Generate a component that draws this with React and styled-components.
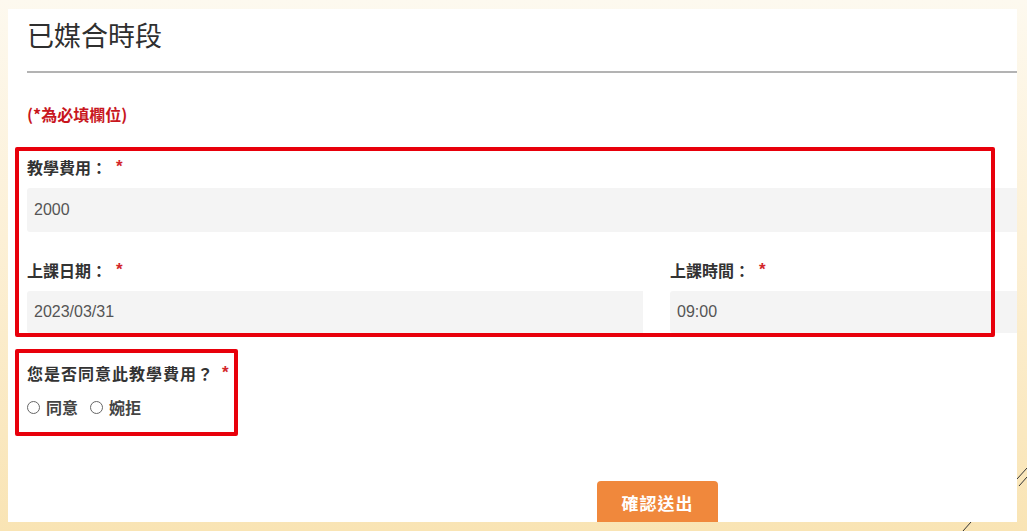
import React from "react";
import styled, { createGlobalStyle } from "styled-components";

const Global = createGlobalStyle`
  html, body { margin: 0; padding: 0; }
  body {
    width: 1027px;
    height: 531px;
    overflow: hidden;
    font-family: "Noto Sans CJK TC", "Liberation Sans", sans-serif;
  }
`;

const Page = styled.div`
  position: relative;
  box-sizing: border-box;
  width: 1027px;
  height: 531px;
  padding: 9px 10px 9px 8px;
  background: linear-gradient(to bottom, #fdf9ef 0%, #fcf0d6 45%, #f9e4b4 100%);
`;

const Deco = styled.svg`
  position: absolute;
  inset: 0;
  width: 1027px;
  height: 531px;
  pointer-events: none;
`;

const Panel = styled.main`
  position: relative;
  box-sizing: border-box;
  height: 100%;
  background: #fff;
  padding: 7px 0 0 19px;
  overflow: hidden;
`;

const Title = styled.h2`
  margin: 0;
  font-size: 27px;
  line-height: 38px;
  font-weight: 400;
  color: #2f2f2f;
`;

const Rule = styled.hr`
  margin: 17px 0 0;
  border: 0;
  height: 2px;
  background: #b3b3b3;
`;

const Required = styled.p`
  margin: 30px 0 0;
  font-size: 16px;
  line-height: 22px;
  font-weight: 700;
  color: #c8161d;
`;

const Field = styled.div`
  display: flex;
  flex-direction: column;
  margin-top: ${(p) => p.$mt || 0}px;
`;

const Label = styled.label`
  display: flex;
  align-items: flex-start;
  font-size: ${(p) => p.$size || 16}px;
  letter-spacing: ${(p) => p.$ls || 0}px;
  line-height: 22px;
  font-weight: 700;
  color: #333;
`;

const Star = styled.span`
  color: #d3262b;
  font-family: "Liberation Sans", sans-serif;
  font-size: 17px;
  line-height: 17px;
  margin-left: ${(p) => p.$gap ?? 9}px;
  margin-top: 2px;
`;

const Input = styled.div`
  box-sizing: border-box;
  height: ${(p) => p.$h || 44}px;
  margin-top: ${(p) => p.$mt || 8}px;
  padding-left: 7px;
  display: flex;
  align-items: center;
  background: #f4f4f4;
  border-radius: 3px 0 0 3px;
  font-family: "Liberation Sans", sans-serif;
  font-size: 16px;
  color: #555;
`;

const Row = styled.div`
  display: grid;
  grid-template-columns: 616px 1fr;
  column-gap: 27px;
  margin-top: 27px;
`;

const Radios = styled.div`
  display: flex;
  align-items: center;
  gap: 12px;
  margin-top: 12px;
`;

const RadioItem = styled.label`
  display: flex;
  align-items: center;
  gap: 6px;
  font-size: 16px;
  line-height: 22px;
  font-weight: 700;
  color: #444;
`;

const Circle = styled.span`
  box-sizing: border-box;
  width: 13px;
  height: 13px;
  border: 1px solid #666;
  border-radius: 50%;
  background: #fff;
`;

const Actions = styled.div`
  display: flex;
  margin-top: 63px;
  padding-left: 570px;
`;

const Button = styled.button`
  width: 121px;
  height: 48px;
  border: 0;
  border-radius: 4px;
  background: #f0883c;
  color: #fff;
  font-family: "Noto Sans CJK TC", sans-serif;
  font-size: 17px;
  font-weight: 700;
  letter-spacing: 1px;
  padding: 0 0 6px;
`;

const Mark = styled.div`
  position: absolute;
  box-sizing: border-box;
  border: 4px solid #e8000b;
  border-radius: 2px;
  pointer-events: none;
`;

export default function App() {
  return (
    <>
      <Global />
      <Page>
        <Deco viewBox="0 0 1027 531">
          <line x1="1017" y1="479" x2="1027" y2="468" stroke="#333" strokeWidth="1" />
          <line x1="1019" y1="486" x2="1027" y2="477" stroke="#333" strokeWidth="1" />
          <line x1="963" y1="531" x2="971" y2="522" stroke="#333" strokeWidth="1" />
        </Deco>
        <Panel>
          <Title>已媒合時段</Title>
          <Rule />
          <Required>(*為必填欄位)</Required>

          <Field $mt={31}>
            <Label>
              教學費用：<Star>*</Star>
            </Label>
            <Input $mt={10}>2000</Input>
          </Field>

          <Row>
            <Field>
              <Label>
                上課日期：<Star>*</Star>
              </Label>
              <Input $h={42} $mt={10}>2023/03/31</Input>
            </Field>
            <Field>
              <Label>
                上課時間：<Star>*</Star>
              </Label>
              <Input $h={42} $mt={10}>09:00</Input>
            </Field>
          </Row>

          <Field $mt={29}>
            <Label $size={16} $ls={1}>
              您是否同意此教學費用？<Star $gap={8}>*</Star>
            </Label>
            <Radios>
              <RadioItem>
                <Circle />
                同意
              </RadioItem>
              <RadioItem>
                <Circle />
                婉拒
              </RadioItem>
            </Radios>
          </Field>

          <Actions>
            <Button type="button">確認送出</Button>
          </Actions>

          <Mark style={{ left: 7, top: 138, width: 980, height: 190 }} />
          <Mark style={{ left: 7, top: 340, width: 223, height: 87 }} />
        </Panel>
      </Page>
    </>
  );
}
